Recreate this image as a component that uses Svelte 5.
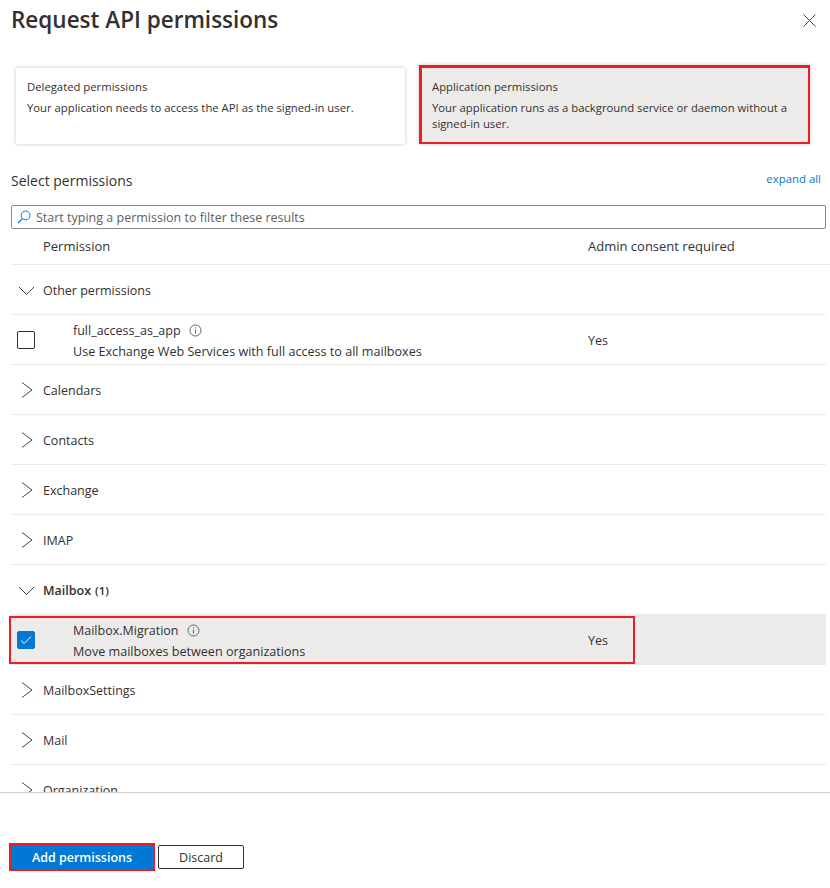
<script>
  const groups = [
    { name: 'Other permissions', open: true, perms: [
      { name: 'full_access_as_app', desc: 'Use Exchange Web Services with full access to all mailboxes', consent: 'Yes', checked: false }
    ] },
    { name: 'Calendars' },
    { name: 'Contacts' },
    { name: 'Exchange' },
    { name: 'IMAP' },
    { name: 'Mailbox', count: 1, open: true, perms: [
      { name: 'Mailbox.Migration', desc: 'Move mailboxes between organizations', consent: 'Yes', checked: true }
    ] },
    { name: 'MailboxSettings' },
    { name: 'Mail' },
    { name: 'Organization' }
  ];
</script>

<div class="panel">
  <header class="title-bar">
    <h1>Request API permissions</h1>
    <button class="close" aria-label="Close">
      <svg width="13" height="13" viewBox="0 0 13 13"><path d="M.5.5l12 12M12.5.5l-12 12" stroke="#444" fill="none" /></svg>
    </button>
  </header>

  <div class="cards">
    <div class="card">
      <div class="card-title">Delegated permissions</div>
      <div class="card-desc">Your application needs to access the API as the signed-in user.</div>
    </div>
    <div class="card selected">
      <div class="card-title">Application permissions</div>
      <div class="card-desc">Your application runs as a background service or daemon without a signed-in user.</div>
    </div>
  </div>

  <div class="select-head">
    <span class="select-label">Select permissions</span>
    <a href="#top" class="expand">expand all</a>
  </div>

  <div class="search">
    <svg width="14" height="14" viewBox="0 0 14 14"><circle cx="8.6" cy="5.4" r="4.4" stroke="#0078d4" fill="none" /><path d="M5.4 8.6L1 13" stroke="#0078d4" stroke-width="1.3" fill="none" /></svg>
    <span>Start typing a permission to filter these results</span>
  </div>

  <div class="table-head">
    <span class="col-name">Permission</span>
    <span class="col-consent">Admin consent required</span>
  </div>

  <div class="list">
    {#each groups as group}
      <div class="row group">
        <span class="chevron">
          {#if group.open}
            <svg width="18" height="18" viewBox="0 0 18 18"><path d="M1 6l7.5 7.5L16 6" stroke="#444" fill="none" /></svg>
          {:else}
            <svg width="18" height="18" viewBox="0 0 18 18"><path d="M4 1.5L14 9 4 16.5" stroke="#444" fill="none" /></svg>
          {/if}
        </span>
        <span class="group-name" class:strong={group.count}>{group.name}{#if group.count}<span class="count">({group.count})</span>{/if}</span>
      </div>
      {#if group.perms}
        {#each group.perms as perm}
          <div class="row perm" class:checked={perm.checked}>
            <span class="box" class:on={perm.checked}>
              {#if perm.checked}
                <svg width="12" height="12" viewBox="0 0 12 12"><path d="M1 6.5l3.2 3L11 2.5" stroke="#fff" fill="none" /></svg>
              {/if}
            </span>
            <div class="perm-text">
              <div class="perm-name">
                {perm.name}
                <svg class="info" width="13" height="13" viewBox="0 0 13 13"><circle cx="6.5" cy="6.5" r="5.5" stroke="#666" fill="none" /><path d="M6.5 5.6v4M6.5 3.2v1.2" stroke="#666" fill="none" /></svg>
              </div>
              <div class="perm-desc">{perm.desc}</div>
            </div>
            <span class="perm-consent">{perm.consent}</span>
            {#if perm.checked}<span class="callout"></span>{/if}
          </div>
        {/each}
      {/if}
    {/each}
  </div>

  <footer class="footer">
    <button class="btn primary">Add permissions</button>
    <button class="btn">Discard</button>
  </footer>
</div>

<style>
  :global(body) {
    background: #fff;
  }
  .panel {
    height: 888px;
    display: flex;
    flex-direction: column;
    font-family: "Open Sans", "Noto Sans", sans-serif;
    font-size: 12.5px;
    color: #323130;
    overflow: hidden;
  }
  .title-bar {
    height: 65px;
    flex: none;
    display: flex;
    justify-content: space-between;
    align-items: flex-start;
    padding: 0 14px 0 11px;
    box-sizing: border-box;
  }
  h1 {
    margin: 4px 0 0;
    font-size: 22.5px;
    line-height: 32px;
    font-weight: 600;
  }
  .close {
    margin-top: 14px;
    padding: 0;
    border: none;
    background: none;
    height: 13px;
  }
  .close svg {
    display: block;
  }
  .cards {
    display: flex;
    align-items: flex-end;
    gap: 14px;
    padding: 0 20px 0 16px;
    height: 79px;
    flex: none;
    font-size: 11.3px;
  }
  .card {
    width: 389px;
    height: 76px;
    box-sizing: border-box;
    padding: 10px 11px;
    box-shadow: 0 0 4px rgba(0, 0, 0, 0.22);
  }
  .card-title {
    line-height: 17px;
    margin-bottom: 5px;
  }
  .card-desc {
    line-height: 16px;
  }
  .card.selected {
    width: 391px;
    height: 79px;
    background: #edebe9;
    border: 2px solid #ed1c24;
    padding: 11px 11px;
    box-shadow: inset 1px 1px 0 #0078d4, 0 0 4px rgba(0, 0, 0, 0.22);
  }
  .select-head {
    display: flex;
    justify-content: space-between;
    padding: 27px 9px 0 11px;
    height: 61px;
    box-sizing: border-box;
    flex: none;
  }
  .select-label {
    font-size: 14px;
    line-height: 20px;
  }
  .expand {
    color: #0078d4;
    text-decoration: none;
    font-size: 11.4px;
    line-height: 16px;
  }
  .search {
    margin: 0 4px 0 11px;
    height: 24px;
    flex: none;
    box-sizing: border-box;
    border: 1px solid #8a8886;
    border-radius: 2px;
    display: flex;
    align-items: center;
    gap: 5px;
    padding-left: 5px;
    color: #605e5c;
  }
  .table-head {
    margin-left: 11px;
    height: 36px;
    flex: none;
    box-sizing: border-box;
    border-bottom: 1px solid #edebe9;
    display: flex;
    align-items: center;
    padding-bottom: 2px;
    font-size: 13px;
  }
  .col-name {
    margin-left: 32px;
    width: 545px;
  }
  .list {
    margin-left: 8px;
    padding-left: 3px;
    margin-right: 4px;
    height: 527px;
    flex: none;
    overflow: hidden;
  }
  .row {
    height: 50px;
    box-sizing: border-box;
    border-bottom: 1px solid #edebe9;
    display: flex;
    align-items: center;
    position: relative;
  }
  .chevron {
    width: 32px;
    padding-left: 7px;
    box-sizing: border-box;
    display: flex;
  }
  .group-name {
    margin-top: 2px;
  }
  .strong {
    font-weight: 600;
  }
  .count {
    font-size: 11.5px;
    margin-left: 4px;
  }
  .perm.checked {
    background: #edebe9;
  }
  .box {
    width: 18px;
    height: 18px;
    box-sizing: border-box;
    margin-left: 6px;
    border: 1px solid #323130;
    border-radius: 2px;
    display: flex;
    align-items: center;
    justify-content: center;
  }
  .box.on {
    background: #0078d4;
    border-color: #0078d4;
  }
  .perm-text {
    margin-left: 38px;
    margin-top: 3px;
    width: 515px;
    line-height: 21px;
  }
  .perm-desc {
    font-size: 12.6px;
  }
  .perm-consent {
    margin-top: 2px;
  }
  .info {
    margin-left: 5px;
    vertical-align: -2px;
  }
  .callout {
    position: absolute;
    left: -2px;
    top: 1px;
    width: 626px;
    height: 48px;
    box-sizing: border-box;
    border: 2px solid #ed1c24;
  }
  .footer {
    margin-top: 0;
    border-top: 1px solid #d2d0ce;
    padding: 52px 0 0 11px;
    display: flex;
    gap: 5px;
    align-items: flex-start;
  }
  .btn {
    height: 24px;
    width: 86px;
    box-sizing: border-box;
    border: 1px solid #323130;
    border-radius: 2px;
    background: #fff;
    color: #323130;
    font: inherit;
    padding: 0;
  }
  .btn.primary {
    width: 142px;
    background: #0078d4;
    color: #fff;
    font-weight: 600;
    border: none;
    border-radius: 0;
    outline: 2px solid #ed1c24;
  }
</style>
